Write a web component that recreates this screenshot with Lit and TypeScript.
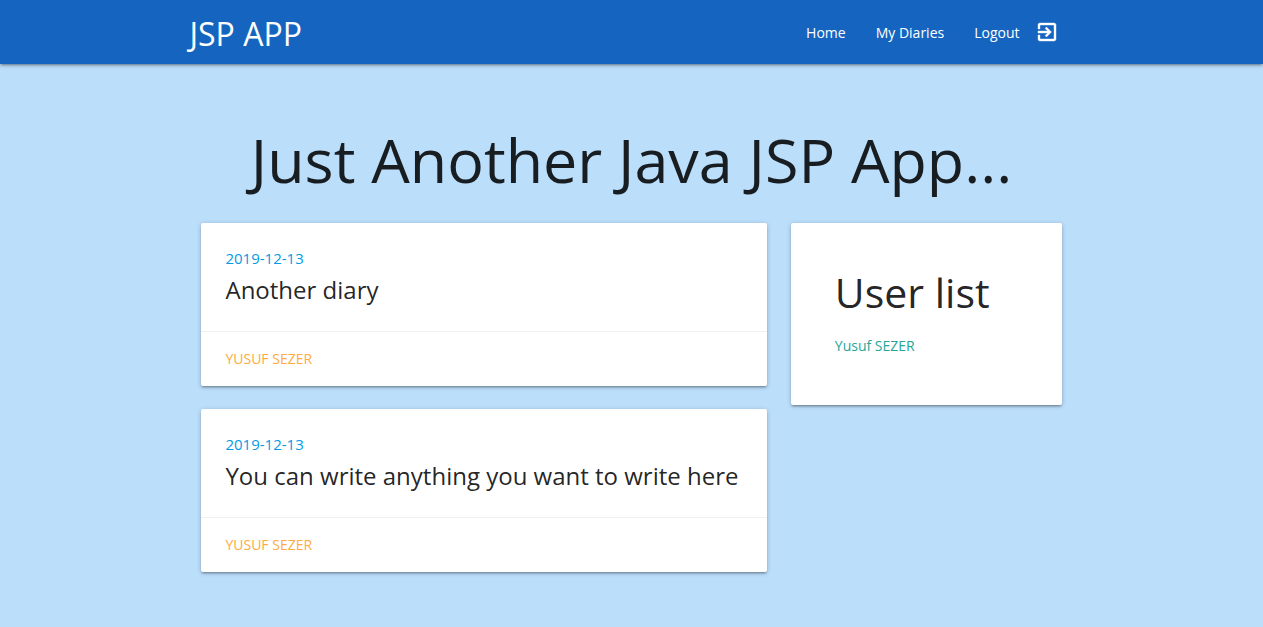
import { LitElement, html, css } from "lit";
import { customElement, property } from "lit/decorators.js";

@customElement("diary-card")
class DiaryCard extends LitElement {
  @property() date = "";
  @property() heading = "";
  @property() author = "";

  static styles = css`
    :host { display: block; }
    .card {
      margin: 8px 0 23px;
      background: #fff;
      border-radius: 2px;
      box-shadow: 0 2px 2px 0 rgba(0,0,0,.14), 0 3px 1px -2px rgba(0,0,0,.12), 0 1px 5px 0 rgba(0,0,0,.2);
    }
    .content { padding: 24px; }
    .date { margin: 0; font-size: 15px; line-height: 23px; color: #039be5; }
    .title { margin: 0; font-size: 24px; font-weight: 400; line-height: 32px; padding: 4px 0 1px; }
    .action { display: flex; padding: 16px 24px; border-top: 1px solid rgba(160,160,160,.15); line-height: 22px; }
    a { color: #ffab40; text-decoration: none; text-transform: uppercase; font-size: 14px; }
  `;

  render() {
    return html`
      <article class="card">
        <div class="content">
          <p class="date">${this.date}</p>
          <h2 class="title">${this.heading}</h2>
        </div>
        <div class="action"><a href="#">${this.author}</a></div>
      </article>
    `;
  }
}

@customElement("app-root")
class AppRoot extends LitElement {
  static styles = css`
    :host {
      display: block;
      min-height: 100vh;
      background: #bbdefb;
      color: rgba(0,0,0,.87);
      font: 15px/1.5 "Segoe UI", "Open Sans", "Noto Sans", sans-serif;
    }
    * { box-sizing: border-box; }
    .nav {
      background: #1565c0;
      box-shadow: 0 2px 2px 0 rgba(0,0,0,.14), 0 3px 1px -2px rgba(0,0,0,.12), 0 1px 5px 0 rgba(0,0,0,.2);
    }
    .container { width: 70%; max-width: 1280px; margin: 0 auto; }
    .bar { display: flex; justify-content: space-between; align-items: center; height: 64px; }
    .bar a { color: #fff; text-decoration: none; }
    .logo { font-size: 32px; line-height: 44px; padding-top: 4px; }
    .links { display: flex; margin: 0; padding: 0; list-style: none; font-size: 14px; }
    .links a { display: flex; align-items: center; height: 64px; padding: 0 15px; gap: 15px; }
    .links svg { width: 24px; height: 24px; fill: currentColor; stroke: currentColor; stroke-width: 0.4; }
    .title { margin: 0; padding: 58px 0 18px; text-align: center; font-size: 61px; line-height: 75px; font-weight: 400; }
    .row { display: grid; grid-template-columns: 2fr 1fr; align-items: start; }
    .col { padding: 0 12px; }
    .users {
      margin: 8px 0;
      padding: 24px 44px 48px;
      background: #fff;
      border-radius: 2px;
      box-shadow: 0 2px 2px 0 rgba(0,0,0,.14), 0 3px 1px -2px rgba(0,0,0,.12), 0 1px 5px 0 rgba(0,0,0,.2);
    }
    .users h2 { margin: 20px 0 17px; font-size: 41px; line-height: 50px; font-weight: 400; }
    .users a { color: #26a69a; text-decoration: none; font-size: 14px; }
  `;

  private diaries = [
    { date: "2019-12-13", heading: "Another diary", author: "Yusuf Sezer" },
    { date: "2019-12-13", heading: "You can write anything you want to write here", author: "Yusuf Sezer" },
  ];

  render() {
    return html`
      <nav class="nav">
        <div class="container bar">
          <a class="logo" href="#">JSP APP</a>
          <ul class="links">
            <li><a href="#">Home</a></li>
            <li><a href="#">My Diaries</a></li>
            <li><a href="#">Logout
              <svg viewBox="0 0 24 24" aria-hidden="true"><path d="M10.09 15.59L11.5 17l5-5-5-5-1.41 1.41L12.67 11H3v2h9.67l-2.58 2.59zM19 3H5c-1.11 0-2 .9-2 2v4h2V5h14v14H5v-4H3v4c0 1.1.89 2 2 2h14c1.1 0 2-.9 2-2V5c0-1.1-.9-2-2-2z"/></svg>
            </a></li>
          </ul>
        </div>
      </nav>
      <main class="container">
        <h1 class="title">Just Another Java JSP App...</h1>
        <div class="row">
          <div class="col">
            ${this.diaries.map((d) => html`<diary-card .date=${d.date} .heading=${d.heading} .author=${d.author}></diary-card>`)}
          </div>
          <div class="col">
            <section class="users">
              <h2>User list</h2>
              <a href="#">Yusuf SEZER</a>
            </section>
          </div>
        </div>
      </main>
    `;
  }
}
